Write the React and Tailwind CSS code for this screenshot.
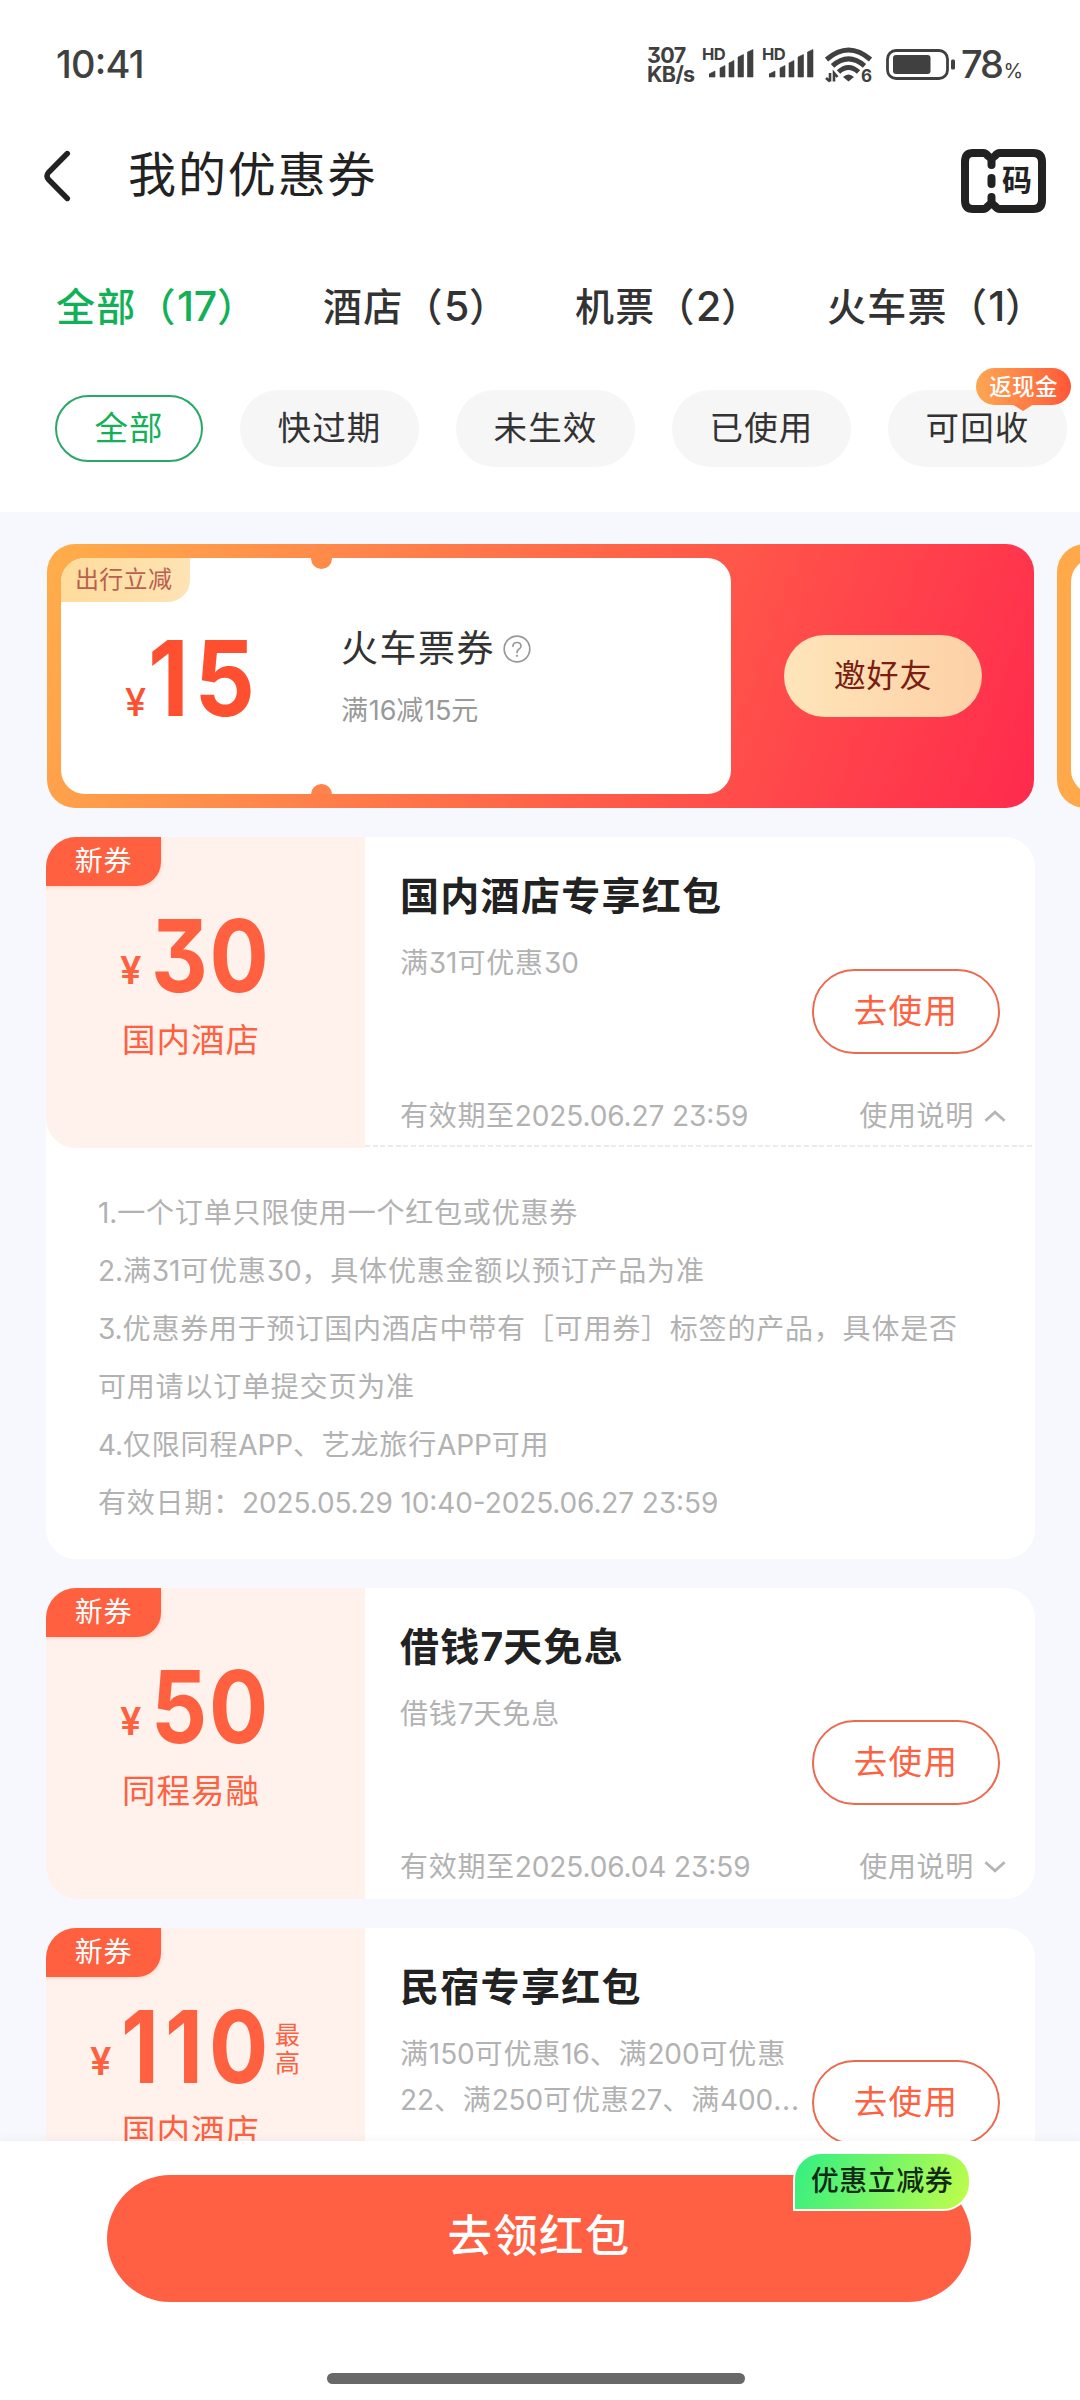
import React from "react";

function Num({ children, className = "" }) {
  return <span className={`tracking-[-0.004em] ${className}`}>{children}</span>;
}

function Signal() {
  return (
    <div className="relative h-8 w-[50px]">
      <span className="absolute left-[-1px] top-0 text-[16.500px] font-bold leading-[14px] tracking-[-0.03em]">HD</span>
      <svg className="absolute left-[6px] top-[2px]" width="45" height="29" viewBox="0 0 45 29" fill="currentColor">
        <path d="M0 28V25L6 22V28ZM11 28V19L16 16.500V28ZM20 28V14L25 11.500V28ZM29 28V8L34.500 5.500V28ZM38.500 28V3L44 .5V28Z" stroke="currentColor" strokeWidth=".6" strokeLinejoin="round" />
      </svg>
    </div>
  );
}

function StatusBar() {
  return (
    <div className="flex h-[128px] items-center pl-[56px] pr-[56px] text-[#404040]">
      <span className="text-[38px] font-medium leading-none tracking-[-0.020em]">10:41</span>
      <div className="ml-auto flex h-[36px] items-start">
        <div className="-ml-[2px] w-[56px] whitespace-nowrap text-[21.500px] font-bold leading-[18.500px] tracking-[-0.030em]">
          <div>307</div>
          <div>KB/s</div>
        </div>
        <div className="mt-[1px] flex gap-[10px]">
          <Signal />
          <Signal />
        </div>
        <svg className="ml-[12px] mt-[1px]" width="48" height="36" viewBox="0 0 48 36" fill="none" stroke="currentColor" strokeWidth="5">
          <path d="M1.500 12.500Q23.500 -6.500 45.500 12.500" />
          <path d="M7.500 18.800Q23.500 4.800 39.500 18.800" />
          <path d="M13.500 25Q23.500 16 33.500 25" />
          <path d="M18 30Q23.500 25 29 30L23.500 34.500Z" fill="currentColor" stroke="none" />
          <path d="M5 26V34.500M1 31L5 34.500M9 34.500V26L12.500 30" strokeWidth="2.600" />
          <text x="36" y="34.500" fontSize="17" fontWeight="700" fill="currentColor" stroke="none" fontFamily="Inter">6</text>
        </svg>
        <svg className="ml-[13px] mt-[3px]" width="70" height="31" viewBox="0 0 70 31">
          <rect x="1.500" y="1.500" width="60" height="28" rx="8.500" fill="none" stroke="currentColor" strokeWidth="2.800" />
          <rect x="7" y="6" width="37.500" height="19" rx="3" fill="currentColor" />
          <rect x="65" y="10.500" width="4" height="10" rx="1.500" fill="currentColor" />
        </svg>
        <div className="ml-[5px] flex w-[63px] items-baseline leading-[36px]">
          <span className="text-[38px] font-medium tracking-[-0.06em]">78</span>
          <span className="ml-[2px] text-[20px]">%</span>
        </div>
      </div>
    </div>
  );
}

function TitleBar() {
  return (
    <div className="flex h-[104px] items-center pl-[43px] pr-[34px]">
      <svg className="-mt-[8px]" width="28" height="52" viewBox="0 0 28 52" fill="none" stroke="#222" strokeWidth="5.400" strokeLinecap="round" strokeLinejoin="round">
        <path d="M24.300 3.500L5.500 22.500Q2.500 26 5.500 29.500L24.300 48.500" />
      </svg>
      <h1 className="-mt-[10px] ml-[57px] text-[48px] leading-none tracking-[1.900px] text-[#222]">我的优惠券</h1>
      <div className="relative ml-auto mt-[2px] h-[64px] w-[85px]">
        <svg width="85" height="64" viewBox="0 0 85 64" fill="none" stroke="#222" strokeWidth="8" strokeLinejoin="round">
          <path d="M12 4H22Q25 4 27 7Q30.500 10.500 34 7Q36 4 39 4H72Q81 4 81 13V51Q81 60 72 60H39Q36 60 34 57Q30.500 53.500 27 57Q25 60 22 60H12Q4 60 4 51V13Q4 4 12 4Z" />
          <path d="M30.500 10V16M30.500 29V35M30.500 48V54" strokeLinecap="round" />
        </svg>
        <span className="absolute left-[41px] top-[16px] text-[30px] font-bold leading-[31px] text-[#222]">码</span>
      </div>
    </div>
  );
}

const tabs = [
  { name: "全部", count: "17", cls: "w-[267px] text-[#13b157]" },
  { name: "酒店", count: "5", cls: "w-[252px] text-[#333]" },
  { name: "机票", count: "2", cls: "w-[252px] text-[#333]" },
  { name: "火车票", count: "1", cls: "w-[220px] text-[#333]" },
];

function Tabs() {
  return (
    <div className="flex h-[148px] pl-[56px] pt-[50px]">
      {tabs.map((t) => (
        <div key={t.name} className={`shrink-0 whitespace-nowrap text-[39px] font-medium leading-[48px] tracking-[1.300px] ${t.cls}`}>
          {t.name}（<Num className="text-[41px]">{t.count}</Num>）
        </div>
      ))}
    </div>
  );
}

function Filters() {
  return (
    <div className="flex h-[132px] items-start gap-[37px] pl-[55px] pt-[10px] text-[33.500px] tracking-[1.100px] text-[#333]">
      <div className="mt-[5px] flex h-[67px] w-[148px] items-center justify-center rounded-full border-2 border-[#2aa866] text-[#13b157]">全部</div>
      {["快过期", "未生效", "已使用", "可回收"].map((f) => (
        <div key={f} className="relative flex h-[77px] w-[179px] shrink-0 items-center justify-center rounded-full bg-[#f6f6f6]">
          {f}
          {f === "可回收" && (
            <div className="absolute left-[88px] top-[-22px] h-[37px] w-[95px] rounded-full bg-linear-to-r from-[#fda653] to-[#ff5638] text-center text-[22.500px] font-medium leading-[38px] tracking-[0.300px] text-white">
              返现金
              <svg className="absolute left-[36px] top-[36px]" width="22" height="7" viewBox="0 0 22 7">
                <path d="M0 0H22L11 7Z" fill="#fe8044" />
              </svg>
            </div>
          )}
        </div>
      ))}
    </div>
  );
}

function Banner() {
  return (
    <div className="flex gap-[23px] overflow-hidden pl-[47px]">
      <div className="flex h-[264px] w-[987px] shrink-0 items-center rounded-[28px] bg-[linear-gradient(110deg,#ffae4b_0%,#ff5f49_57%,#ff2a4d_100%)] pl-[14px]">
        <div className="relative flex h-[236px] w-[670px] overflow-hidden rounded-[24px] bg-white">
          <div className="absolute left-0 top-0 h-[44px] w-[129px] rounded-br-[22px] bg-linear-to-r from-[#ffdc9c] to-[#ffe3b4] pl-[14px] text-[24px] leading-[44px] tracking-[0.300px] text-[#b9604f]">出行立减</div>
          <div className="absolute left-[250px] top-[-10.500px] h-[21px] w-[21px] rounded-full bg-[#ff8b47]" />
          <div className="absolute bottom-[-10.500px] left-[250px] h-[21px] w-[21px] rounded-full bg-[#ff834a]" />
          <div className="flex w-[280px] items-baseline pl-[64px] pt-[60px] text-[#fe5030]">
            <span className="text-[38px] font-medium leading-none">¥</span>
            <span className="ml-[2px] origin-left scale-x-90 text-[105px] font-bold leading-[120px] tracking-[0.060em]">15</span>
          </div>
          <div className="pt-[66px]">
            <div className="flex items-center text-[37px] leading-[50px] tracking-[1.500px] text-[#333]">
              火车票券
              <svg className="ml-[8px]" width="28" height="28" viewBox="0 0 28 28" fill="none" stroke="#999" strokeWidth="1.700">
                <circle cx="14" cy="14" r="12.800" />
                <path d="M10 11.300Q10 7.500 14 7.500T18 11.200Q18 13 15.800 14.200Q14 15.300 14 17.500" strokeLinecap="round" />
                <circle cx="14" cy="20.800" r=".7" fill="#999" strokeWidth="1" />
              </svg>
            </div>
            <div className="mt-[18px] text-[27px] leading-[38px] tracking-[0.800px] text-[#999]">满<Num>16</Num>减<Num>15</Num>元</div>
          </div>
        </div>
        <div className="ml-[53px] flex h-[82px] w-[198px] items-center justify-center rounded-full bg-linear-to-r from-[#ffe5ba] to-[#fdd0a6] pb-[1px] text-[32px] tracking-[0.900px] text-[#7c1d12]">邀好友</div>
      </div>
      <div className="flex h-[264px] w-[100px] shrink-0 items-center rounded-[28px] bg-[#ffa94b] pl-[14px]">
        <div className="h-[236px] w-[86px] rounded-l-[24px] bg-white" />
      </div>
    </div>
  );
}

function Chevron({ up }) {
  return (
    <svg className="ml-[10px]" width="22" height="14" viewBox="0 0 23 14" fill="none" stroke="#b5b5b5" strokeWidth="3">
      <path d={up ? "M1.500 12L11.500 3L21.500 12" : "M1.500 2L11.500 11L21.500 2"} />
    </svg>
  );
}

function Coupon({ amount, most, name, title, desc, until, open, children }) {
  return (
    <section className="w-[989px] overflow-hidden rounded-[30px] bg-white">
      <div className="flex h-[311px]">
        <div className="flex w-[319px] shrink-0 flex-col rounded-bl-[30px] bg-[#fff1ec] text-[#fe6040]">
          <div className="h-[49px] w-[115px] rounded-br-[24px] bg-[#fe6040] text-center text-[28px] leading-[49px] tracking-[0.800px] text-white shadow-[0_1px_4px_#fe604033]">新券</div>
          <div className={`flex h-[124px] ${most ? "pl-[44px]" : "pl-[74px]"}`}>
            <span className="mt-[65px] w-[30px] text-[38px] font-semibold leading-none">¥</span>
            <div className={`mt-[7px] whitespace-nowrap text-[101px] font-bold leading-[124px] ${most ? "ml-[1px] w-[148px] tracking-[0.070em]" : "ml-[1px] w-[111px] tracking-[0.020em]"}`}>
              <div className="origin-left scale-x-[0.87]">{amount}</div>
            </div>
            {most && <span className="ml-[6px] mt-[44px] w-[25px] text-[25px] leading-[28px]">最高</span>}
          </div>
          <div className="w-[290px] text-center text-[33.500px] leading-[60px] tracking-[1px]">{name}</div>
        </div>
        <div className="relative flex grow flex-col pl-[35px] pt-[34px]">
          <h2 className="text-[39px] font-bold leading-[50px] tracking-[1.300px] text-[#222]">{title}</h2>
          <div className="mt-[19px] whitespace-nowrap text-[28px] leading-[46px] tracking-[0.850px] text-[#b2b2b2]">{desc}</div>
          <div className="absolute right-[35px] top-[132px] flex h-[85px] w-[188px] items-center justify-center rounded-full border-2 border-[#ed6a50] bg-white text-[33.500px] tracking-[1.300px] text-[#fe6040]">去使用</div>
          <div className="mb-[9px] mt-auto flex items-center pr-[29px] text-[28px] leading-[46px] text-[#b2b2b2]">
            <span className="tracking-[0.700px]">有效期至<Num>{until}</Num></span>
            <span className="ml-auto tracking-[0.700px]">使用说明</span>
            <Chevron up={open} />
          </div>
          {open && (
            <div className="absolute bottom-[1px] left-0 h-[2px] w-full bg-[repeating-linear-gradient(90deg,#ebebeb_0_5px,transparent_5px_7.700px)]" />
          )}
        </div>
      </div>
      {children}
    </section>
  );
}

function Rules() {
  return (
    <div className="h-[411px] whitespace-nowrap pl-[52px] pt-[36px] text-[28px] leading-[58px] tracking-[0.800px] text-[#b2b2b2]">
      <div><Num>1.</Num>一个订单只限使用一个红包或优惠券</div>
      <div><Num>2.</Num>满<Num>31</Num>可优惠<Num>30</Num>，具体优惠金额以预订产品为准</div>
      <div><Num>3.</Num>优惠券用于预订国内酒店中带有［可用券］标签的产品，具体是否</div>
      <div>可用请以订单提交页为准</div>
      <div><Num>4.</Num>仅限同程<Num>APP</Num>、艺龙旅行<Num>APP</Num>可用</div>
      <div>有效日期：<Num>2025.05.29 10:40-2025.06.27 23:59</Num></div>
    </div>
  );
}

function BottomBar() {
  return (
    <div className="absolute inset-x-0 bottom-0 flex h-[259px] flex-col bg-white pl-[107px] pt-[34px] shadow-[0_-2px_8px_rgba(0,0,0,0.04)]">
      <div className="relative h-[127px] w-[864px] rounded-full bg-[#ff5f43] text-center text-[44.500px] font-medium leading-[122px] tracking-[1.300px] text-white">
        去领红包
        <div className="absolute right-0 top-[-23px] h-[59px] w-[178px] rounded-[28px] rounded-bl-none border-2 border-white bg-[linear-gradient(115deg,#31ef82,#c2fd49)] text-center text-[28px] font-medium leading-[55px] tracking-[0.500px] text-[#102a16]">优惠立减券</div>
      </div>
      <div className="mb-[16px] ml-[220px] mt-auto h-[11px] w-[418px] rounded-full bg-[#686868]" />
    </div>
  );
}

export default function App() {
  return (
    <div lang="zh-CN" className="relative h-[2400px] w-[1080px] overflow-hidden bg-[#f6f8fd] font-['Inter','Noto_Sans_CJK_SC',sans-serif] [font-feature-settings:'cv09','calt']">
      <header className="h-[512px] overflow-hidden bg-white">
        <StatusBar />
        <TitleBar />
        <Tabs />
        <Filters />
      </header>
      <main className="pt-[32px]">
        <Banner />
        <div className="mt-[29px] flex flex-col gap-[29px] pl-[46px]">
          <Coupon amount="30" name="国内酒店" title="国内酒店专享红包" desc={<>满<Num>31</Num>可优惠<Num>30</Num></>} until="2025.06.27 23:59" open>
            <Rules />
          </Coupon>
          <Coupon amount="50" name="同程易融" title={<>借钱<Num>7</Num>天免息</>} desc={<>借钱<Num>7</Num>天免息</>} until="2025.06.04 23:59" />
          <Coupon
            amount="110"
            most
            name="国内酒店"
            title="民宿专享红包"
            desc={<>满<Num>150</Num>可优惠<Num>16</Num>、满<Num>200</Num>可优惠<br /><Num>22</Num>、满<Num>250</Num>可优惠<Num>27</Num>、满<Num>400</Num>...</>}
            until="2025.06.27 23:59"
          />
        </div>
      </main>
      <BottomBar />
    </div>
  );
}
